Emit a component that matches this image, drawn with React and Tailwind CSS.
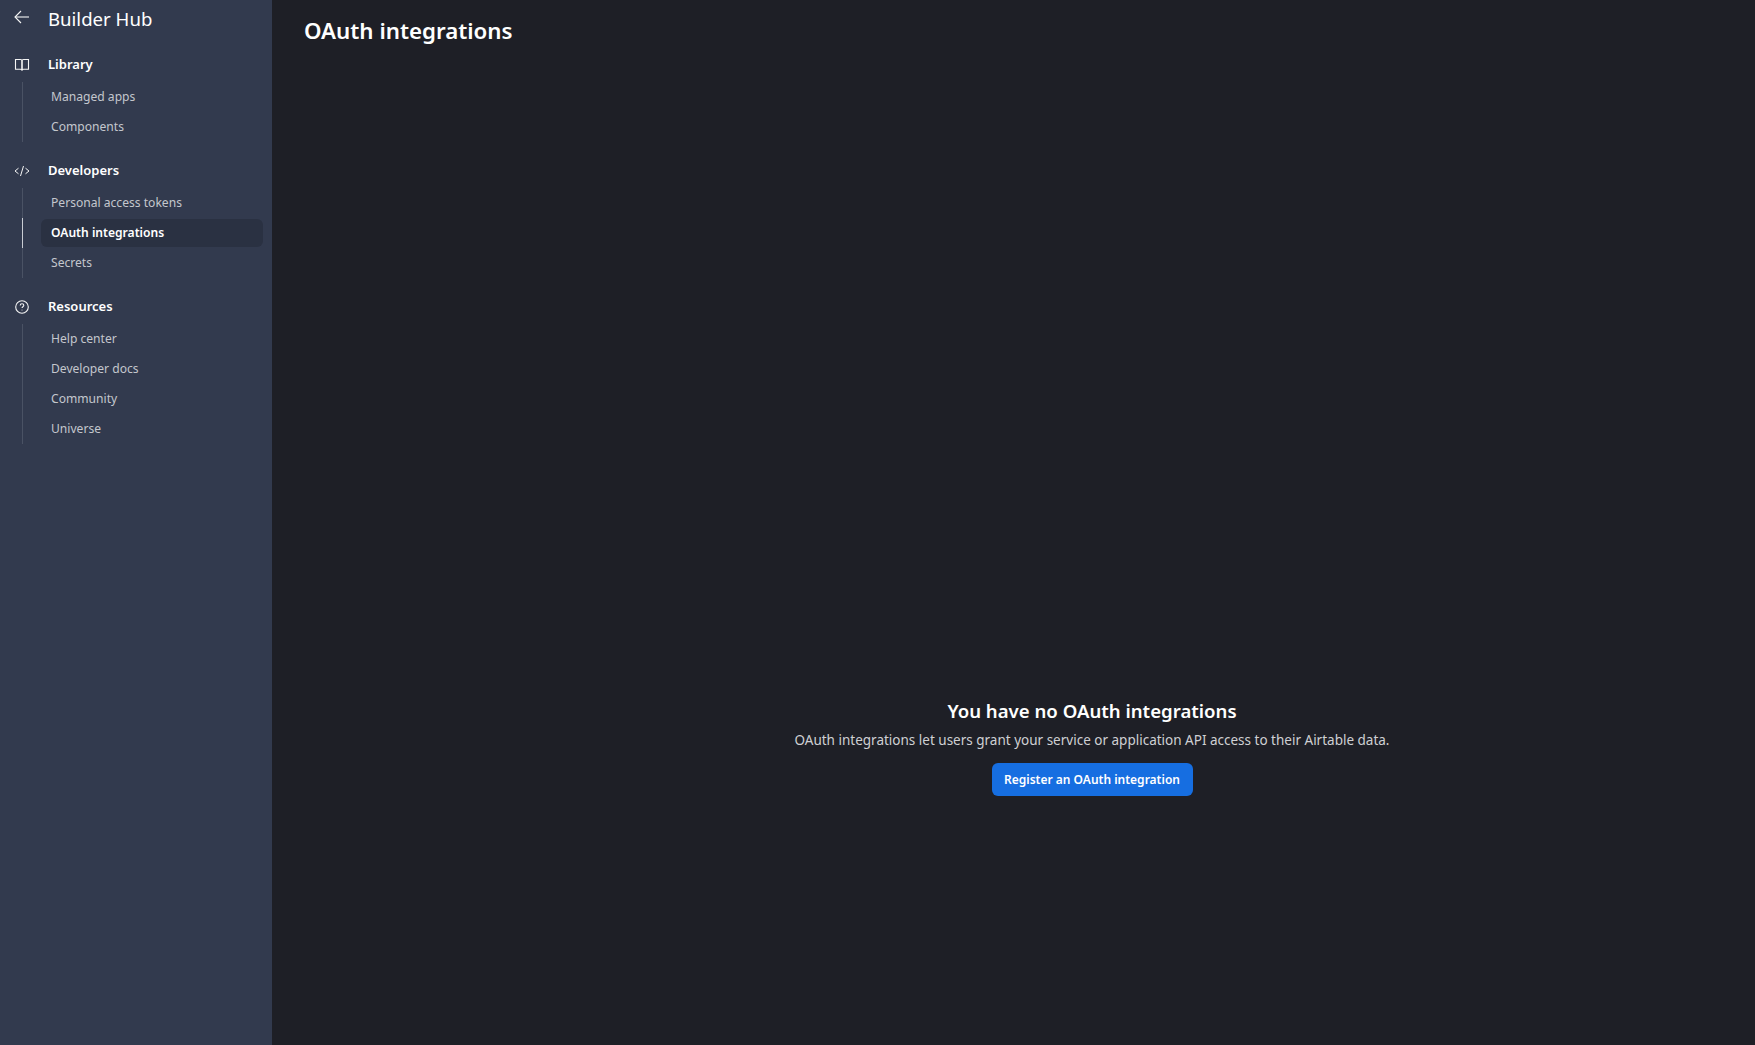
import React from 'react';

const sections = [
  {
    title: 'Library',
    icon: (
      <svg width="16" height="16" viewBox="0 0 16 16" fill="none" stroke="currentColor" strokeWidth="1.1">
        <path d="M1.5 2.5h5c.9 0 1.5.5 1.5 1.3v9.7c0-.7-.6-1.2-1.5-1.2h-5z" />
        <path d="M14.5 2.5h-5c-.9 0-1.5.5-1.5 1.3v9.7c0-.7.6-1.2 1.5-1.2h5z" />
      </svg>
    ),
    items: ['Managed apps', 'Components'],
  },
  {
    title: 'Developers',
    icon: (
      <svg width="16" height="16" viewBox="0 0 16 16" fill="none" stroke="currentColor" strokeWidth="1">
        <path d="M4.5 5.2 1 8l3.5 2.8" />
        <path d="M11.5 5.2 15 8l-3.5 2.8" />
        <path d="M9.5 3 6.5 13" />
      </svg>
    ),
    items: ['Personal access tokens', 'OAuth integrations', 'Secrets'],
  },
  {
    title: 'Resources',
    icon: (
      <svg width="16" height="16" viewBox="0 0 16 16" fill="none" stroke="currentColor" strokeWidth="1.1">
        <circle cx="8" cy="8" r="6.3" />
        <path d="M6.2 6.4C6.2 5.4 7 4.8 8 4.8s1.8.6 1.8 1.5c0 1.4-1.8 1.4-1.8 2.8" />
        <circle cx="8" cy="11.1" r=".5" fill="currentColor" stroke="none" />
      </svg>
    ),
    items: ['Help center', 'Developer docs', 'Community', 'Universe'],
  },
];

const Section = ({ section }) => (
  <div className="mb-[19px]">
    <div className="flex items-center h-[20px] mb-[7px]">
      <span className="w-[48px] pl-[14px] text-[#f5f5f5] flex">{section.icon}</span>
      <span className="text-[13px] font-semibold text-white">{section.title}</span>
    </div>
    <div className="flex flex-col ml-[22px]">
      {section.items.map((item) => {
        const active = item === 'OAuth integrations';
        return (
          <div key={item} className={`flex h-[30px] border-l ${active ? 'border-[#c9ccd3]' : 'border-[#4a5264]'}`}>
            <div
              className={`flex items-center flex-1 ml-[18px] pl-[10px] mr-[9px] my-[1px] rounded-md text-[12.1px] ${
                active ? 'bg-[#2a3142] text-white font-semibold' : 'text-[#c4c7cd]'
              }`}
            >
              {item}
            </div>
          </div>
        );
      })}
    </div>
  </div>
);

const App = () => {
  return (
    <div className="flex h-screen w-full overflow-hidden bg-[#1e1f26] font-['Noto_Sans',sans-serif]">
      <aside className="w-[272px] shrink-0 bg-[#323a4e] pt-[4px]">
        <div className="flex items-center h-[30px] mb-[21px]">
          <span className="w-[48px] pl-[13px] pb-[4px] text-[#f5f5f5] flex">
            <svg width="18" height="18" viewBox="0 0 18 18" fill="none" stroke="currentColor" strokeWidth="1.1">
              <path d="M16 9H2" />
              <path d="M8 3 2 9l6 6" />
            </svg>
          </span>
          <span className="text-[18.6px] text-white">Builder Hub</span>
        </div>
        {sections.map((section) => (
          <Section key={section.title} section={section} />
        ))}
      </aside>

      <main className="flex-1 flex flex-col min-w-0">
        <h1 className="text-[22.3px] font-semibold text-white pl-[32px] pt-[14px] leading-[34px]">OAuth integrations</h1>
        <div className="flex flex-col items-center mt-[650px] pl-[157px]">
          <h2 className="text-[18.6px] font-semibold text-white leading-[26px]">You have no OAuth integrations</h2>
          <p className="text-[13.5px] text-[#cfd0d3] mt-[6px] leading-[20px]">
            OAuth integrations let users grant your service or application API access to their Airtable data.
          </p>
          <button className="mt-[13px] h-[33px] w-[201px] rounded-md bg-[#166ee1] text-[12px] font-semibold text-white">
            Register an OAuth integration
          </button>
        </div>
      </main>
    </div>
  );
};

export default App;
